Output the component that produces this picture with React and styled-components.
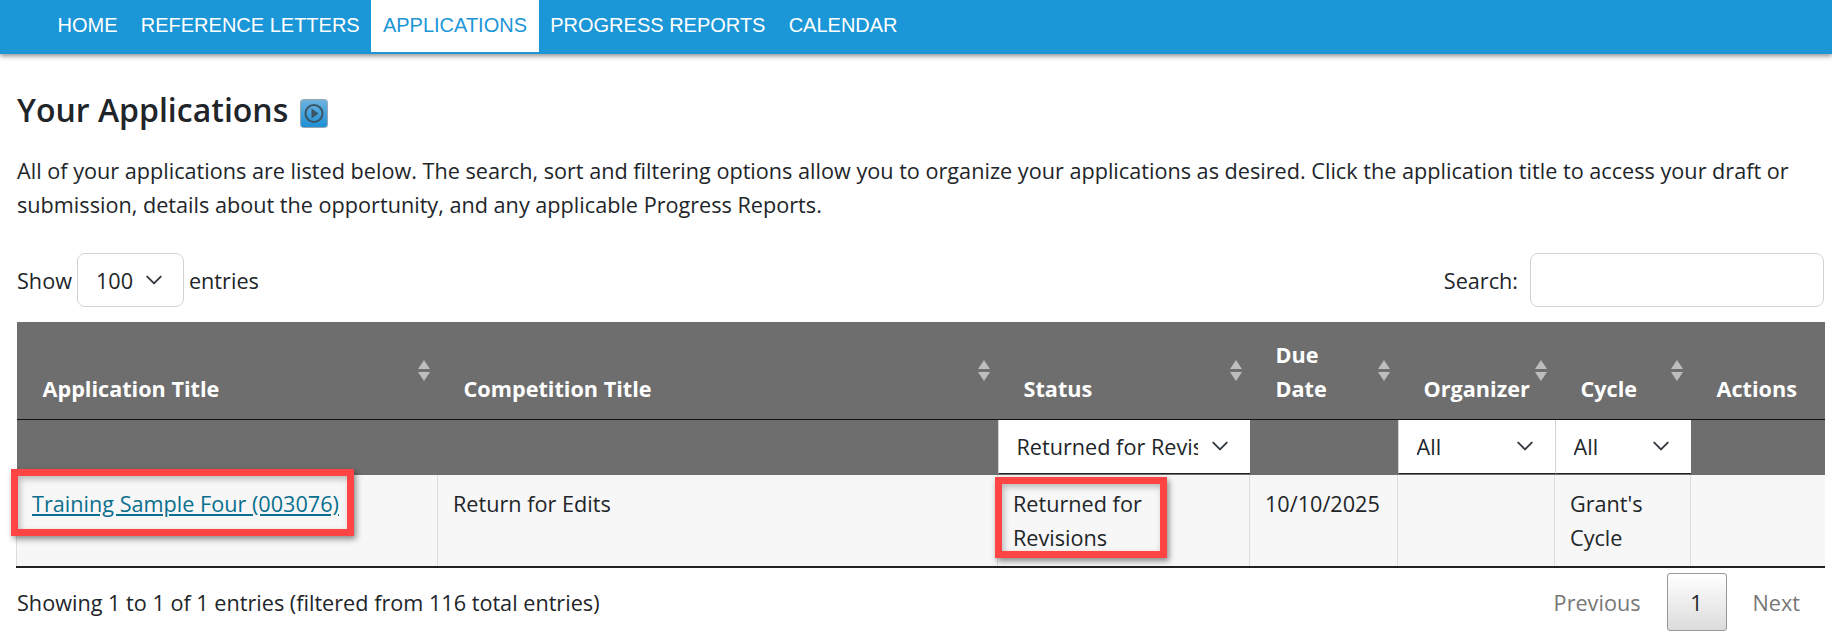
import React from "react"
import styled, { createGlobalStyle } from "styled-components"

const chevron = "url(\"data:image/svg+xml,%3csvg xmlns='http://www.w3.org/2000/svg' viewBox='0 0 16 16'%3e%3cpath fill='none' stroke='%23343a40' stroke-linecap='round' stroke-linejoin='round' stroke-width='1.7' d='m2 5 6 6 6-6'/%3e%3c/svg%3e\")"

const GlobalStyle = createGlobalStyle`
  html, body {
    margin: 0;
    background: #fff;
    color: #212529;
    font-family: "Open Sans", "Liberation Sans", sans-serif;
    font-size: 21.65px;
  }
`

const NavBar = styled.nav`
  height: 54px;
  background: #1b96d6;
  box-shadow: 0 2px 5px rgba(0, 0, 0, 0.45);
  padding-left: 46px;
  display: flex;
  align-items: flex-start;
`

const NavItem = styled.a`
  height: 52px;
  line-height: 50px;
  padding: 0 11.6px;
  font-family: "Liberation Sans", Arial, sans-serif;
  font-size: 20px;
  white-space: nowrap;
  color: ${(p) => (p.$active ? "#1b96d6" : "#fff")};
  background: ${(p) => (p.$active ? "#fff" : "transparent")};
`

const Content = styled.main`
  padding: 0 8px 0 16px;
`

const Heading = styled.h1`
  margin: 0;
  padding: 33px 0 0 1px;
  height: 67px;
  box-sizing: content-box;
  display: flex;
  align-items: flex-start;
  gap: 12px;
  font-size: 32px;
  line-height: 46px;
  font-weight: 600;
  color: #212529;
`

const Intro = styled.p`
  margin: 0;
  padding-left: 1px;
  line-height: 33.6px;
`

const Toolbar = styled.div`
  margin-top: 32px;
  padding-left: 1px;
  height: 54px;
  display: flex;
  justify-content: space-between;
  align-items: center;
`

const Label = styled.label`
  display: flex;
  align-items: center;
  gap: 5px;
`

const LengthSelect = styled.select`
  appearance: none;
  width: 107px;
  height: 54px;
  padding: 0 0 0 18px;
  border: 1px solid #ced4da;
  border-radius: 8px;
  background: #fff ${chevron} no-repeat right 20px center / 18px 18px;
  color: #212529;
  font: inherit;
`

const SearchInput = styled.input`
  width: 294px;
  height: 54px;
  box-sizing: border-box;
  border: 1px solid #ced4da;
  border-radius: 8px;
  margin-left: 7px;
`

const Table = styled.table`
  margin-top: 15px;
  width: 1808px;
  table-layout: fixed;
  border-collapse: collapse;
  border-bottom: 2px solid #222;
`

const HeadCell = styled.th`
  position: relative;
  height: 97px;
  padding: 14px 30px 13px 26px;
  box-sizing: border-box;
  vertical-align: bottom;
  text-align: left;
  background: #6e6e6e;
  color: #fff;
  font-weight: 700;
  line-height: 34px;
  border-bottom: 1px solid #111;
`

const SortArrows = styled.svg`
  position: absolute;
  top: 38px;
  right: 7.5px;
  width: 12px;
  height: 21px;
`

const FilterCell = styled.th`
  height: 55px;
  padding: 0;
  background: #6e6e6e;
  vertical-align: top;
`

const FilterSelect = styled.select`
  appearance: none;
  display: block;
  width: 100%;
  height: 54px;
  padding: 0 52px 0 18px;
  border: 0;
  border-left: 1px solid #ced4da;
  border-bottom: 1px solid #222;
  border-radius: 0;
  background: #fff ${chevron} no-repeat right 21px center / 18px 18px;
  color: #212529;
  font: inherit;
  font-weight: 400;
`

const BodyCell = styled.td`
  position: relative;
  padding: 12px 15px 11px;
  vertical-align: top;
  background: #f7f7f7;
  line-height: 34px;
  border-left: 1px solid #ddd;
`

const EntryLink = styled.a`
  color: #0a6f8e;
  text-decoration: underline;
`

const Callout = styled.span`
  position: absolute;
  left: ${(p) => p.$left}px;
  top: ${(p) => p.$top}px;
  width: ${(p) => p.$width}px;
  height: ${(p) => p.$height}px;
  box-sizing: border-box;
  border: 7px solid #ff4444;
  box-shadow: 2px 3px 6px rgba(0, 0, 0, 0.45), inset 2px 3px 6px rgba(0, 0, 0, 0.25);
  pointer-events: none;
`

const Footer = styled.div`
  height: 58px;
  margin-top: 5px;
  display: flex;
  justify-content: space-between;
  align-items: center;
`

const EntriesInfo = styled.span`
  padding: 2px 0 0 1px;
`

const Pagination = styled.div`
  display: flex;
  align-items: center;
  padding: 0 24px 0 0;
`

const PageLink = styled.span`
  color: #777;
  padding-top: 2px;
`

const PageButton = styled.span`
  width: 60px;
  height: 58px;
  margin: 0 26px 0 26px;
  padding-top: 2px;
  box-sizing: border-box;
  display: flex;
  align-items: center;
  justify-content: center;
  border: 1px solid #979797;
  border-radius: 3px;
  background: linear-gradient(to bottom, #fff, #dcdcdc);
`

const TourIcon = () => (
  <svg width="28" height="29" viewBox="0 0 28 29" style={{ marginTop: 12 }}>
    <defs>
      <linearGradient id="tour" x1="0" y1="0" x2="0" y2="1">
        <stop offset="0" stopColor="#6fb3de" />
        <stop offset="1" stopColor="#1b8fd6" />
      </linearGradient>
    </defs>
    <rect x="0.5" y="0.5" width="27" height="28" rx="3" fill="url(#tour)" stroke="#9aa7b0" />
    <circle cx="14" cy="14.5" r="8.5" fill="none" stroke="#3c5566" strokeWidth="2" />
    <path d="M11.5 9.5 L18.5 14.5 L11.5 19.5 Z" fill="#3c5566" />
  </svg>
)

const Sort = () => (
  <SortArrows viewBox="0 0 12 21">
    <path d="M6 0 L12 9 H0 Z" fill="#bdbdbd" />
    <path d="M6 21 L12 12 H0 Z" fill="#bdbdbd" />
  </SortArrows>
)

const columns = [
  { title: "Application Title", width: 421, sort: true },
  { title: "Competition Title", width: 560, sort: true },
  { title: "Status", width: 252, sort: true },
  { title: "Due Date", width: 148, sort: true },
  { title: "Organizer", width: 157, sort: true },
  { title: "Cycle", width: 136, sort: true },
  { title: "Actions", width: 134, sort: false },
]

const navItems = ["HOME", "REFERENCE LETTERS", "APPLICATIONS", "PROGRESS REPORTS", "CALENDAR"]

const App = () => {
  return (
    <>
      <GlobalStyle />
      <NavBar>
        {navItems.map((item) => (
          <NavItem key={item} $active={item === "APPLICATIONS"}>{item}</NavItem>
        ))}
      </NavBar>
      <Content>
        <Heading>Your Applications <TourIcon /></Heading>
        <Intro>
          All of your applications are listed below. The search, sort and filtering options allow you to organize your applications as desired. Click the application title to access your draft or submission, details about the opportunity, and any applicable Progress Reports.
        </Intro>
        <Toolbar>
          <Label>
            Show
            <LengthSelect defaultValue="100"><option>100</option></LengthSelect>
            entries
          </Label>
          <Label>
            Search:
            <SearchInput />
          </Label>
        </Toolbar>
        <Table>
          <colgroup>
            {columns.map((col) => <col key={col.title} style={{ width: col.width }} />)}
          </colgroup>
          <thead>
            <tr>
              {columns.map((col) => (
                <HeadCell key={col.title}>
                  {col.title}
                  {col.sort && <Sort />}
                </HeadCell>
              ))}
            </tr>
            <tr>
              <FilterCell />
              <FilterCell />
              <FilterCell>
                <FilterSelect defaultValue="Returned for Revisions"><option>Returned for Revisions</option></FilterSelect>
              </FilterCell>
              <FilterCell />
              <FilterCell>
                <FilterSelect defaultValue="All"><option>All</option></FilterSelect>
              </FilterCell>
              <FilterCell>
                <FilterSelect defaultValue="All"><option>All</option></FilterSelect>
              </FilterCell>
              <FilterCell />
            </tr>
          </thead>
          <tbody>
            <tr>
              <BodyCell>
                <EntryLink>Training Sample Four (003076)</EntryLink>
                <Callout $left={-6} $top={-6} $width={343} $height={67} />
              </BodyCell>
              <BodyCell>Return for Edits</BodyCell>
              <BodyCell>
                Returned for Revisions
                <Callout $left={-3} $top={2} $width={172} $height={81} />
              </BodyCell>
              <BodyCell>10/10/2025</BodyCell>
              <BodyCell />
              <BodyCell>Grant's Cycle</BodyCell>
              <BodyCell />
            </tr>
          </tbody>
        </Table>
        <Footer>
          <EntriesInfo>Showing 1 to 1 of 1 entries (filtered from 116 total entries)</EntriesInfo>
          <Pagination>
            <PageLink>Previous</PageLink>
            <PageButton>1</PageButton>
            <PageLink>Next</PageLink>
          </Pagination>
        </Footer>
      </Content>
    </>
  )
}

export default App
